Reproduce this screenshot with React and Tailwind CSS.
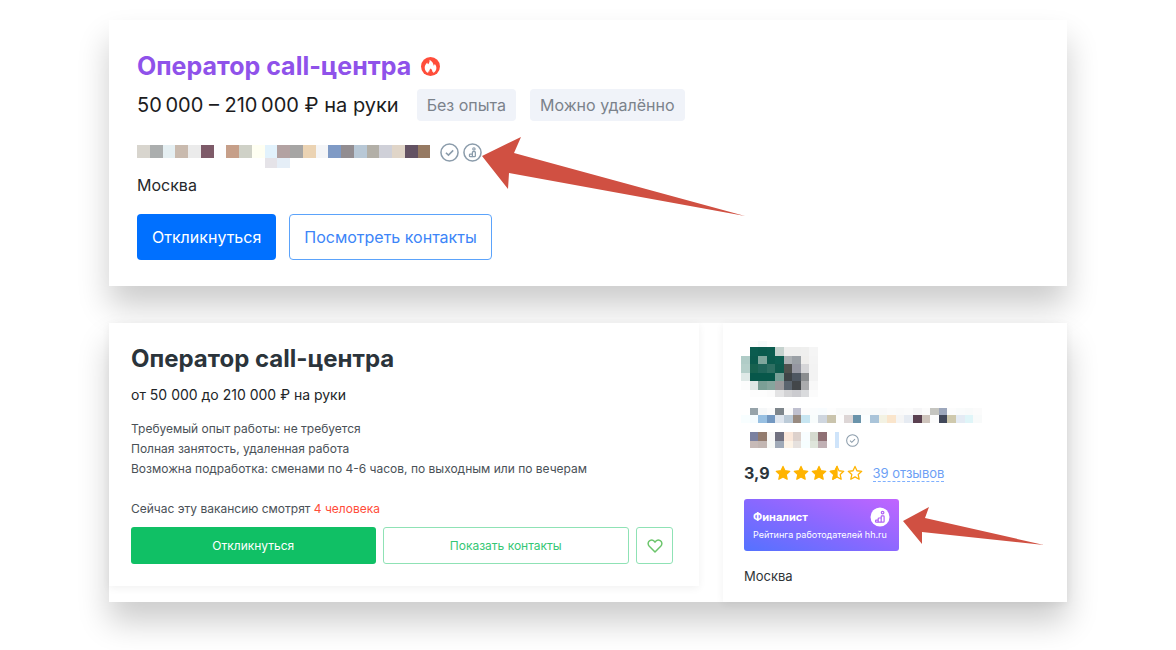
import React from 'react';

const blurredCompany = [
  {
    height: 13,
    cells: ['#d8d5ce', '#abaeae', '#e5eff2', '#c9baae', '#ebebeb', '#7d5a68', '#fdfdfe', '#c69f89', '#cfd1c7', '#fffff2', '#e2f2fc', '#b3a2a2', '#a6a5a4', '#ebd3b3', '#f4f5f7', '#7f9ac5', '#928d91', '#b8c8d6', '#b2afa7', '#cfd0d8', '#e0d5c8', '#635263', '#967a63'],
  },
  {
    height: 10,
    cells: ['', '', '', '', '', '', '', '', '', '', '#e5e3e8', '#e5eef7'],
  },
];

const blurredLogo = [
  { height: 6, cells: ['', '#fdfdfd', '#f5fafa', '#fdfdfd'] },
  { height: 9, cells: ['', '#0b5c4f', '#0a5a4d', '#0b5c4f', '#c5d2ce', '#eeeeed', '#eeeeed', '#efefee', '#f5f5f5'] },
  { height: 8, cells: ['#b0ccc7', '#0b5a4d', '#7fa69c', '#0b5a4d', '#0d5e51', '#aaafb2', '#9aa0a5', '#efeeec', '#f4f4f4'] },
  { height: 9, cells: ['#b5cfca', '#17614f', '#20655a', '#2e6e62', '#0f5a4d', '#50524f', '#9597a1', '#d6d6d8', '#f3f3f3'] },
  { height: 8, cells: ['#dfe9e7', '#07574a', '#07574a', '#07574a', '#789f97', '#3f4447', '#4e5761', '#8a8d8f', '#f3f3f3'] },
  { height: 9, cells: ['#fcfcfc', '#dfe8e6', '#7b9f96', '#86a59d', '#9a999b', '#5a646e', '#43474a', '#aaabad', '#f8f8f8'] },
  { height: 7, cells: ['', '#fdfdfd', '#fdfdfd', '#fbfbfb', '#e3e3e4', '#d3d3d5', '#cbcbcf', '#dadbdd', '#fbfbfb'] },
];

const blurredName = [
  {
    height: 7,
    cells: ['', '#96a3aa', '#f5f7f8', '#fbfbfb', '#7e868c', '#fbfbfb', '#bfc0cf', '#fcfcfc', '#fafcfd', '#f8fcfe', '#fdfdfd', '#f9fafa', '#f9fafa', '#f9fafa', '#fafbfb', '#f8fafa', '#f9f9f9', '#fbfbfb', '#fafafa', '#fbfbfb', '#f5f5f6', '#fbfbfb', '#c5c5c0', '#9da7bc', '#fcfcfc', '#f9fbfb', '#f8fafa', '#fbfbfb'],
  },
  {
    height: 8,
    cells: ['#f8feff', '#f5fcff', '#98c0e2', '#7398c1', '#dfe6ef', '#bccbd8', '#988a80', '#c7e5f1', '#f8fcfc', '#cfd6df', '#cac4ad', '#fdfdfd', '#ddd6d6', '#6a93aa', '#fbfeff', '#aac4d9', '#f3f2e3', '#fae5cc', '#f5f5f5', '#e6ebf2', '#5a4050', '#cec4bc', '#fcfcfc', '#42485a', '#cfc9ad', '#e4ebf4', '#dff5f8', '#f8fafa'],
  },
];

const blurredNameEnd = [
  {
    height: 9,
    cells: ['', '#7b81a0', '#927b6e', '#f7f7f7', '#70707f', '#fae7da', '#ddd1cc', '#f8fdff', '#d5dacf', '#8f7074'],
  },
  {
    height: 7,
    cells: ['', '#c7bab7', '#c2b6b2', '#f7f9f6', '#a0aab8', '#fdf3e6', '#e6e1de', '#f6feff', '#dfe5db', '#c0b0b4'],
  },
];

const Mosaic = ({ rows, cell, className, extra }) => {
  const top = (i) => rows.slice(0, i).reduce((sum, r) => sum + r.height, 0);
  const height = top(rows.length);
  const width = Math.round(Math.max(...rows.map((r) => r.cells.length)) * cell) + (extra ? 12 : 0);

  return (
    <svg className={className} width={width} height={height} shapeRendering="crispEdges" aria-hidden="true">
      {rows.map((row, i) =>
        row.cells.map((color, j) =>
          color ? <rect key={`${i}-${j}`} x={j * cell} y={top(i)} width={cell} height={row.height} fill={color} /> : null
        )
      )}
      {extra && <rect x={width - 4} y="0" width="4" height={height} fill={extra} />}
    </svg>
  );
};

const CheckIcon = ({ className }) => (
  <svg className={className} viewBox="0 0 20 20" fill="none" stroke="#8b9cab" strokeWidth="1.6" aria-hidden="true">
    <circle cx="10" cy="10" r="9" />
    <path d="M6.2 10.2l2.7 2.6 5-5" />
  </svg>
);

// podium with a small winner on the top step
const Podium = () => (
  <>
    <circle cx="12.6" cy="5.600" r="1.3" />
    <path d="M11.200 15.200V9.600q0-.8.8-.8h1.300q.8 0 .8.8v4.800q0 .8-.8.8z" />
    <path d="M11.200 15.200H8.200v-3.400q0-.8.8-.8h2.200" />
    <path d="M8.200 15.200H6.300q-.8 0-.8-.8v-.5q0-.8.8-.8h1.900" />
  </>
);

const AwardIcon = ({ className }) => (
  <svg className={className} viewBox="0 0 20 20" fill="none" stroke="#8b9cab" aria-hidden="true">
    <circle cx="10" cy="10" r="9" strokeWidth="1.6" />
    <g strokeWidth="1.3">
      <circle cx="11.5" cy="6.2" r="1.2" />
      <path d="M9.900 14.400V9.800q0-.8.8-.8h1.500q.8 0 .8.8v3.800q0 .8-.8.8z" />
      <path d="M9.900 14.400H7.600q-.8 0-.8-.8v-1.200q0-.8.8-.8h2.300" />
    </g>
  </svg>
);

const FireIcon = ({ className }) => (
  <svg className={className} viewBox="0 0 20 20" aria-hidden="true">
    <circle cx="10" cy="10" r="10" fill="#ff4d3a" />
    <path
      fill="#fff"
      d="M9 2.800c.4 2.200-.5 3.500-1.500 4.900-.6-.4-.9-1-.9-1.800C4.900 7.500 3.900 9.200 3.900 11.200c0 2.600 1.500 4.700 3.800 5.700-.3-.6-.3-1.300 0-1.900l1 .9c-.3-1.600.3-2.700 1.500-3.900 1.200 1 1.900 2.200 1.700 3.900l.9-.7c.2.5.1 1.100-.1 1.600 2.100-.9 3.500-2.900 3.500-5.300 0-1.700-.7-3-1.800-4.100-.1.900-.4 1.500-1 1.900C13.100 6.500 11.500 4.200 9 2.800z"
    />
  </svg>
);

const STAR = 'M10 1.800l2.500 5.400 5.900.7-4.400 4 1.200 5.900L10 14.900l-5.200 2.900L6 11.900l-4.400-4 5.900-.7z';

const Star = ({ fill }) => (
  <svg className="size-4" viewBox="0 0 20 20" stroke="#ffb400" strokeWidth="1.600" strokeLinejoin="round" aria-hidden="true">
    <path d={STAR} fill={fill === 'full' ? '#ffb400' : 'none'} />
    {fill === 'half' && <path d="M10 1.800v13.100l-5.200 2.900L6 11.900l-4.400-4 5.900-.7z" fill="#ffb400" />}
  </svg>
);

const stars = ['full', 'full', 'full', 'half', 'empty'];

const SearchCard = () => (
  <section className="bg-white px-7 pt-7 pb-[26px] shadow-[0_20px_30px_rgba(0,0,0,0.2)]">
    <div className="flex items-center gap-[10px]">
      <h2 className="text-[25px] leading-9 font-bold text-[#8f52ea]">Оператор call-центра</h2>
      <FireIcon className="size-[19px]" />
    </div>

    <div className="mt-[5px] flex items-center">
      <p className="mr-[18px] text-xl text-[#1c1c1e]">50&#8201;000 – 210&#8201;000 ₽ на руки</p>
      <span className="mr-[14px] rounded bg-[#f0f3f9] px-[10px] py-1 text-base text-[#7b828b]">Без опыта</span>
      <span className="rounded bg-[#f0f3f9] px-[10px] py-1 text-base text-[#7b828b]">Можно удалённо</span>
    </div>

    <div className="mt-5 flex items-start">
      <Mosaic rows={blurredCompany} cell={12.75} className="mt-1" />
      <div className="relative mt-[2px] ml-[10px] flex gap-1">
        <CheckIcon className="size-[19px]" />
        <AwardIcon className="size-[19px]" />
        <svg className="absolute -top-[6px] left-full" width="264" height="80" fill="#d05042" aria-hidden="true">
          <path d="M0 19L39 0l-7 16 231 63L27 36l-1 16z" />
        </svg>
      </div>
    </div>

    <p className="mt-[5px] text-base text-[#26282b]">Москва</p>

    <div className="mt-[17px] flex gap-[13px]">
      <button className="h-[46px] rounded bg-[#0070ff] px-[15px] text-base text-white">Откликнуться</button>
      <button className="h-[46px] rounded border border-[#5ba3fb] px-[14px] text-base text-[#3c85f8]">
        Посмотреть контакты
      </button>
    </div>
  </section>
);

const VacancyPanel = () => (
  <div className="self-start bg-white pt-5 pr-[26px] pb-[22px] pl-[22px] shadow-[0_2px_8px_rgba(0,0,0,0.06)]">
    <h2 className="text-2xl leading-8 font-bold text-[#2b343b]">Оператор call-центра</h2>
    <p className="mt-[10px] text-sm text-[#222528]">от 50 000 до 210 000 ₽ на руки</p>

    <div className="mt-[14px] text-xs leading-5 text-[#4a5157]">
      <p>Требуемый опыт работы: не требуется</p>
      <p>Полная занятость, удаленная работа</p>
      <p>Возможна подработка: сменами по 4-6 часов, по выходным или по вечерам</p>
      <p className="mt-5">
        Сейчас эту вакансию смотрят <span className="text-[#ff4d3a]">4 человека</span>
      </p>
    </div>

    <div className="mt-2 flex gap-[7px]">
      <button className="h-[37px] flex-1 rounded-[3px] bg-[#10c065] text-xs text-white">Откликнуться</button>
      <button className="h-[37px] flex-1 rounded-[3px] border border-[#8fe2b5] text-xs text-[#35c775]">
        Показать контакты
      </button>
      <button
        aria-label="В избранное"
        className="flex size-[37px] items-center justify-center rounded-[3px] border border-[#8fe2b5]"
      >
        <svg className="size-4" viewBox="0 0 16 16" fill="none" stroke="#6cc56c" strokeWidth="1.500" strokeLinejoin="round" aria-hidden="true">
          <path d="M8 14L2.300 8.300C.5 6.400.9 3.700 2.800 2.600 4.700 1.600 6.900 2.300 8 4.200c1.100-1.900 3.300-2.600 5.200-1.600 1.900 1.100 2.300 3.800.5 5.700z" />
        </svg>
      </button>
    </div>
  </div>
);

const CompanyPanel = () => (
  <div className="bg-white pt-[18px] pb-4 pl-[18px] shadow-[0_2px_8px_rgba(0,0,0,0.06)]">
    <Mosaic rows={blurredLogo} cell={8.5} />
    <Mosaic rows={blurredName} cell={8.6} className="mt-[11px]" />
    <div className="mt-[9px] flex items-center gap-[7px]">
      <Mosaic rows={blurredNameEnd} cell={8.6} extra="#cfe4fa" />
      <CheckIcon className="size-[13px]" />
    </div>

    <div className="mt-[13px] flex items-center pl-[3px]">
      <span className="text-base font-bold text-[#2b343b]">3,9</span>
      <div className="ml-[5px] flex gap-[2px]">
        {stars.map((fill, i) => (
          <Star key={i} fill={fill} />
        ))}
      </div>
      <a href="#reviews" className="ml-[10px] border-b border-dashed border-[#7fb0ff] text-[13px] leading-4 text-[#6d9ff5]">
        39 отзывов
      </a>
    </div>

    <div className="mt-[14px] ml-[3px] w-[155px] rounded-[3px] bg-linear-[20deg,#5472ff,#8a68ff_50%,#c165ff] px-[9px] py-2 text-white">
      <div className="flex items-center justify-between">
        <span className="text-[11px] leading-5 font-bold">Финалист</span>
        <svg className="size-5" viewBox="0 0 20 20" fill="none" stroke="#b164f5" strokeWidth="1.200" aria-hidden="true">
          <circle cx="10" cy="10" r="9.500" fill="#fff" stroke="none" />
          <Podium />
        </svg>
      </div>
      <p className="text-[9px] leading-4 whitespace-nowrap">Рейтинга работодателей hh.ru</p>
    </div>

    <p className="mt-[15px] ml-[3px] text-[13px] leading-5 text-[#2f3437]">Москва</p>
  </div>
);

const App = () => {
  return (
    <main className="min-h-screen bg-white px-[109px] pt-5 pb-12 font-['Inter',sans-serif]">
      <SearchCard />

      <section className="relative mt-[37px] grid grid-cols-[1fr_344px] gap-6 bg-white shadow-[0_20px_30px_rgba(0,0,0,0.2)]">
        <VacancyPanel />
        <CompanyPanel />
        <svg className="absolute right-[22px] bottom-[57px]" width="142" height="38" fill="#d05042" aria-hidden="true">
          <path d="M0 14L26 0l-4 11 119 27L19 25v12z" />
        </svg>
      </section>
    </main>
  );
};

export default App;
